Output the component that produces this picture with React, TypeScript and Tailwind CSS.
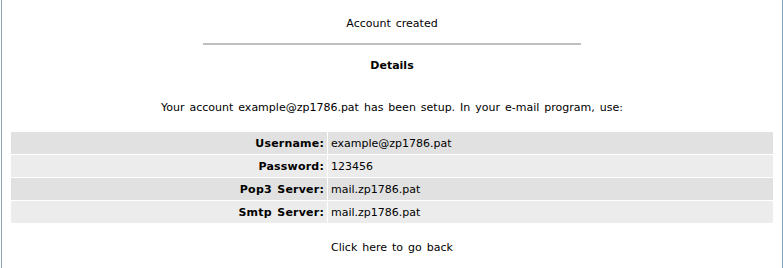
import React from "react";

const rows = [
  { label: "Username:", value: "example@zp1786.pat" },
  { label: "Password:", value: "123456" },
  { label: "Pop3 Server:", value: "mail.zp1786.pat" },
  { label: "Smtp Server:", value: "mail.zp1786.pat" },
];

export default function App() {
  return (
    <div className="flex h-[268px] w-[783px] bg-white font-['DejaVu_Sans',sans-serif] text-[11px] leading-[13px] text-black [word-spacing:1.5px]">
      <div className="w-px" />
      <div className="w-px bg-[#8ea2b9]" />

      <div className="flex flex-1 flex-col items-center px-2">
        <p className="mt-[17px] text-center">Account created</p>
        <div className="mt-[13px] h-[2px] w-[378px] bg-[#c0c0c0]" />
        <p className="mt-[14px] text-center font-bold">Details</p>
        <p className="mt-[29px] text-center">
          Your account example@zp1786.pat has been setup. In your e-mail program, use:
        </p>

        {/* details table */}
        <div className="mt-[17px] grid w-full grid-cols-[316px_1fr] gap-px p-px">
          {rows.map((r, i) => {
            const bg = i % 2 === 0 ? "bg-[#e1e1e1]" : "bg-[#ececec]";
            return (
              <React.Fragment key={r.label}>
                <div className={`flex h-[22px] items-center justify-end pr-[3px] font-bold tracking-[0.2px] ${bg}`}>{r.label}</div>
                <div className={`flex h-[22px] items-center pl-[3px] ${bg}`}>{r.value}</div>
              </React.Fragment>
            );
          })}
        </div>

        <a className="mt-[17px] cursor-pointer text-center">Click here to go back</a>
      </div>

      <div className="w-px bg-[#7aa4c4]" />
    </div>
  );
}
